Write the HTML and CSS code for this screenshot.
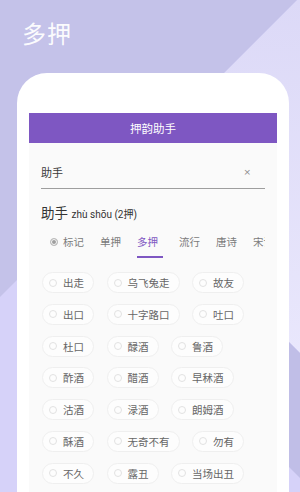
FILE: index.html
```html
<!DOCTYPE html>
<html lang="zh">
<head>
<meta charset="utf-8">
<link rel="stylesheet" href="styles.css">
</head>
<body>
<svg class="bg" viewBox="0 0 300 492" width="300" height="492" aria-hidden="true">
  <defs>
    <linearGradient id="lg" x1="0" y1="0" x2="0" y2="1">
      <stop offset="0" stop-color="#dcd9f7"/>
      <stop offset="1" stop-color="#e9e7fc"/>
    </linearGradient>
  </defs>
  <rect x="0" y="0" width="300" height="492" fill="#d6d2f9"/>
  <polygon points="297,0 300,0 300,353 122,175" fill="url(#lg)"/>
  <polygon points="0,0 297,0 0,297" fill="#c4c2e9"/>
  <polygon points="122,175 300,353 300,478 59.5,237.5" fill="#c0bee7"/>
</svg>
<div class="page">
  <h1 class="title">多押</h1>
  <div class="card">
    <div class="screen">
      <div class="appbar">押韵助手</div>
      <div class="content">
        <div class="field">
          <span class="field-text">助手</span>
          <span class="clear">×</span>
        </div>
        <div class="result-head"><span class="word">助手</span> <span class="pinyin">zhù shōu (2押)</span></div>
        <div class="tabs">
          <div class="tab mark"><span class="radio-on"></span>标记</div>
          <div class="tab">单押</div>
          <div class="tab active">多押</div>
          <div class="tab">流行</div>
          <div class="tab">唐诗</div>
          <div class="tab">宋词</div>
        </div>
        <div class="chips">
          <div class="chip"><span class="dot"></span>出走</div>
          <div class="chip"><span class="dot"></span>乌飞兔走</div>
          <div class="chip"><span class="dot"></span>故友</div>
          <div class="chip"><span class="dot"></span>出口</div>
          <div class="chip"><span class="dot"></span>十字路口</div>
          <div class="chip"><span class="dot"></span>吐口</div>
          <div class="chip"><span class="dot"></span>杜口</div>
          <div class="chip"><span class="dot"></span>醁酒</div>
          <div class="chip"><span class="dot"></span>鲁酒</div>
          <div class="chip"><span class="dot"></span>酢酒</div>
          <div class="chip"><span class="dot"></span>醋酒</div>
          <div class="chip"><span class="dot"></span>早秫酒</div>
          <div class="chip"><span class="dot"></span>沽酒</div>
          <div class="chip"><span class="dot"></span>渌酒</div>
          <div class="chip"><span class="dot"></span>朗姆酒</div>
          <div class="chip"><span class="dot"></span>酥酒</div>
          <div class="chip"><span class="dot"></span>无奇不有</div>
          <div class="chip"><span class="dot"></span>勿有</div>
          <div class="chip"><span class="dot"></span>不久</div>
          <div class="chip"><span class="dot"></span>露丑</div>
          <div class="chip"><span class="dot"></span>当场出丑</div>
        </div>
      </div>
    </div>
  </div>
</div>
</body>
</html>
```
FILE: styles.css
```css
html, body {
  margin: 0;
  padding: 0;
  width: 300px;
  height: 492px;
  overflow: hidden;
  font-family: "Noto Sans CJK SC", "Noto Sans", sans-serif;
}
.bg {
  position: absolute;
  left: 0;
  top: 0;
  z-index: 0;
}
.page {
  position: relative;
  z-index: 1;
  height: 492px;
  display: flex;
  flex-direction: column;
}
.title {
  margin: 21px 0 0 22px;
  font-size: 24px;
  line-height: 24px;
  font-weight: 400;
  color: rgba(255,255,255,0.95);
  letter-spacing: 1px;
}
.card {
  margin: 28px 0 0 17px;
  width: 272px;
  flex: 1;
  background: #ffffff;
  border-radius: 30px 30px 0 0;
  padding: 40px 12px 0 12px;
  box-sizing: border-box;
  display: flex;
  flex-direction: column;
}
.screen {
  flex: 1;
  background: #fafafa;
  display: flex;
  flex-direction: column;
}
.appbar {
  height: 30px;
  line-height: 30px;
  background: #7e57c2;
  color: #ffffff;
  text-align: center;
  font-size: 11.5px;
}
.content {
  padding: 0 12px;
}
.field {
  margin-top: 20px;
  height: 18px;
  padding-bottom: 7px;
  border-bottom: 1px solid #9e9e9e;
  display: flex;
  align-items: center;
  justify-content: space-between;
}
.field-text {
  font-size: 11px;
  color: #3a3a3a;
  line-height: 18px;
}
.clear {
  font-family: "DejaVu Sans", sans-serif;
  font-size: 9px;
  color: #8a8a8a;
  margin-right: 14px;
}
.result-head {
  margin-top: 12px;
  height: 20px;
  line-height: 20px;
  color: #333333;
  white-space: nowrap;
}
.word {
  font-size: 13.5px;
}
.pinyin {
  font-family: Roboto, "Noto Sans CJK SC", sans-serif;
  font-size: 10px;
}
.tabs {
  display: flex;
  gap: 16px;
  overflow: hidden;
  white-space: nowrap;
  padding-left: 9px;
}
.tab {
  flex: none;
  font-size: 10.5px;
  line-height: 14px;
  padding: 14px 0 7px;
  border-bottom: 2px solid transparent;
  color: #7a7a7a;
  display: flex;
  align-items: center;
}
.tab.active {
  color: #7e57c2;
  border-bottom-color: #7e57c2;
  padding-right: 5px;
}
.radio-on {
  width: 6px;
  height: 6px;
  border-radius: 50%;
  border: 1px solid #bdbdbd;
  background: #9e9e9e;
  box-shadow: inset 0 0 0 1px #fafafa;
  margin-right: 5px;
}
.chips {
  margin-top: 14px;
  padding-left: 1px;
  display: flex;
  flex-wrap: wrap;
  column-gap: 12.5px;
  row-gap: 10.75px;
  width: 210px;
}
.chip {
  height: 21px;
  box-sizing: border-box;
  border: 1px solid #efefef;
  border-radius: 11px;
  background: #fdfdfd;
  display: flex;
  align-items: center;
  padding: 0 9px 0 6px;
  font-size: 10.5px;
  color: #666666;
  white-space: nowrap;
}
.dot {
  width: 8px;
  height: 8px;
  box-sizing: border-box;
  border: 1px solid #e2e2e2;
  border-radius: 50%;
  margin-right: 6px;
  flex: none;
}
```
